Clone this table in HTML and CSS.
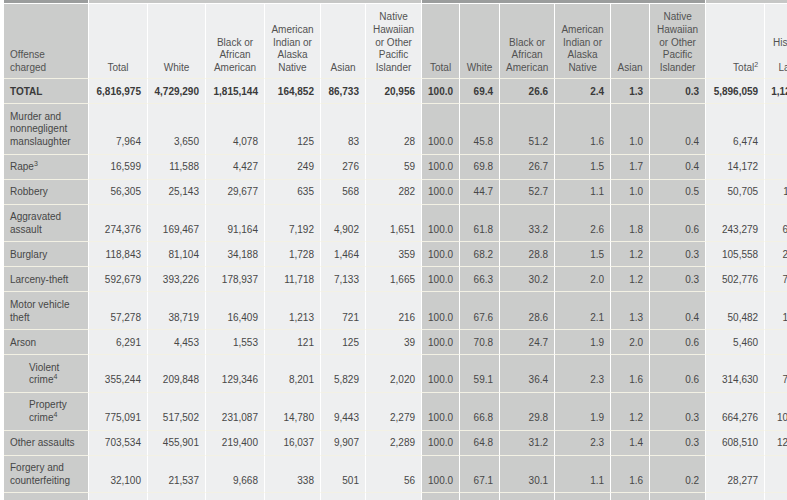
FILE: index.html
```html
<!DOCTYPE html>
<html lang="en">
<head>
<meta charset="utf-8">
<title>Arrests by Race and Ethnicity</title>
<link rel="stylesheet" href="styles.css">
</head>
<body>
<table class="data">
  <colgroup>
    <col class="w85"><col class="w59"><col class="w58"><col class="w59"><col class="w56"><col class="w45"><col class="w56">
    <col class="w38"><col class="w40"><col class="w55"><col class="w56"><col class="w39"><col class="w56">
    <col class="w59"><col class="w55"><col class="w58">
  </colgroup>
  <thead>
    <tr class="group">
      <th class="g-dark"></th>
      <th class="g-mid" colspan="6"></th>
      <th class="g-dark" colspan="6"></th>
      <th class="g-mid" colspan="3"></th>
    </tr>
    <tr class="heads">
      <th class="dk first">Offense<br>charged</th>
      <th>Total</th>
      <th>White</th>
      <th>Black or African American</th>
      <th>American Indian or Alaska Native</th>
      <th>Asian</th>
      <th>Native Hawaiian or Other Pacific Islander</th>
      <th class="dk">Total</th>
      <th class="dk">White</th>
      <th class="dk">Black or African American</th>
      <th class="dk">American Indian or Alaska Native</th>
      <th class="dk">Asian</th>
      <th class="dk">Native Hawaiian or Other Pacific Islander</th>
      <th class="right">Total<sup>2</sup></th>
      <th>Hispanic<br>or<br>Latino</th>
      <th>Not Hispanic or Latino</th>
    </tr>
  </thead>
  <tbody>
    <tr class="bold">
      <td class="first">TOTAL</td><td>6,816,975</td><td>4,729,290</td><td>1,815,144</td><td>164,852</td><td>86,733</td><td>20,956</td>
      <td class="dk">100.0</td><td class="dk">69.4</td><td class="dk">26.6</td><td class="dk">2.4</td><td class="dk">1.3</td><td class="dk">0.3</td>
      <td>5,896,059</td><td>1,124,560</td><td>4,771,499</td>
    </tr>
    <tr>
      <td class="first">Murder and nonnegligent manslaughter</td><td>7,964</td><td>3,650</td><td>4,078</td><td>125</td><td>83</td><td>28</td>
      <td class="dk">100.0</td><td class="dk">45.8</td><td class="dk">51.2</td><td class="dk">1.6</td><td class="dk">1.0</td><td class="dk">0.4</td>
      <td>6,474</td><td>1,351</td><td>5,123</td>
    </tr>
    <tr>
      <td class="first">Rape<sup>3</sup></td><td>16,599</td><td>11,588</td><td>4,427</td><td>249</td><td>276</td><td>59</td>
      <td class="dk">100.0</td><td class="dk">69.8</td><td class="dk">26.7</td><td class="dk">1.5</td><td class="dk">1.7</td><td class="dk">0.4</td>
      <td>14,172</td><td>3,457</td><td>10,715</td>
    </tr>
    <tr>
      <td class="first">Robbery</td><td>56,305</td><td>25,143</td><td>29,677</td><td>635</td><td>568</td><td>282</td>
      <td class="dk">100.0</td><td class="dk">44.7</td><td class="dk">52.7</td><td class="dk">1.1</td><td class="dk">1.0</td><td class="dk">0.5</td>
      <td>50,705</td><td>11,129</td><td>39,576</td>
    </tr>
    <tr>
      <td class="first">Aggravated assault</td><td>274,376</td><td>169,467</td><td>91,164</td><td>7,192</td><td>4,902</td><td>1,651</td>
      <td class="dk">100.0</td><td class="dk">61.8</td><td class="dk">33.2</td><td class="dk">2.6</td><td class="dk">1.8</td><td class="dk">0.6</td>
      <td>243,279</td><td>64,530</td><td>178,749</td>
    </tr>
    <tr>
      <td class="first">Burglary</td><td>118,843</td><td>81,104</td><td>34,188</td><td>1,728</td><td>1,464</td><td>359</td>
      <td class="dk">100.0</td><td class="dk">68.2</td><td class="dk">28.8</td><td class="dk">1.5</td><td class="dk">1.2</td><td class="dk">0.3</td>
      <td>105,558</td><td>22,067</td><td>83,491</td>
    </tr>
    <tr>
      <td class="first">Larceny-theft</td><td>592,679</td><td>393,226</td><td>178,937</td><td>11,718</td><td>7,133</td><td>1,665</td>
      <td class="dk">100.0</td><td class="dk">66.3</td><td class="dk">30.2</td><td class="dk">2.0</td><td class="dk">1.2</td><td class="dk">0.3</td>
      <td>502,776</td><td>78,776</td><td>424,000</td>
    </tr>
    <tr>
      <td class="first">Motor vehicle theft</td><td>57,278</td><td>38,719</td><td>16,409</td><td>1,213</td><td>721</td><td>216</td>
      <td class="dk">100.0</td><td class="dk">67.6</td><td class="dk">28.6</td><td class="dk">2.1</td><td class="dk">1.3</td><td class="dk">0.4</td>
      <td>50,482</td><td>12,546</td><td>37,936</td>
    </tr>
    <tr>
      <td class="first">Arson</td><td>6,291</td><td>4,453</td><td>1,553</td><td>121</td><td>125</td><td>39</td>
      <td class="dk">100.0</td><td class="dk">70.8</td><td class="dk">24.7</td><td class="dk">1.9</td><td class="dk">2.0</td><td class="dk">0.6</td>
      <td>5,460</td><td>892</td><td>4,568</td>
    </tr>
    <tr>
      <td class="first indent">Violent crime<sup>4</sup></td><td>355,244</td><td>209,848</td><td>129,346</td><td>8,201</td><td>5,829</td><td>2,020</td>
      <td class="dk">100.0</td><td class="dk">59.1</td><td class="dk">36.4</td><td class="dk">2.3</td><td class="dk">1.6</td><td class="dk">0.6</td>
      <td>314,630</td><td>76,467</td><td>238,163</td>
    </tr>
    <tr>
      <td class="first indent">Property crime<sup>4</sup></td><td>775,091</td><td>517,502</td><td>231,087</td><td>14,780</td><td>9,443</td><td>2,279</td>
      <td class="dk">100.0</td><td class="dk">66.8</td><td class="dk">29.8</td><td class="dk">1.9</td><td class="dk">1.2</td><td class="dk">0.3</td>
      <td>664,276</td><td>104,281</td><td>559,995</td>
    </tr>
    <tr>
      <td class="first">Other assaults</td><td>703,534</td><td>455,901</td><td>219,400</td><td>16,037</td><td>9,907</td><td>2,289</td>
      <td class="dk">100.0</td><td class="dk">64.8</td><td class="dk">31.2</td><td class="dk">2.3</td><td class="dk">1.4</td><td class="dk">0.3</td>
      <td>608,510</td><td>128,345</td><td>480,165</td>
    </tr>
    <tr>
      <td class="first">Forgery and counterfeiting</td><td>32,100</td><td>21,537</td><td>9,668</td><td>338</td><td>501</td><td>56</td>
      <td class="dk">100.0</td><td class="dk">67.1</td><td class="dk">30.1</td><td class="dk">1.1</td><td class="dk">1.6</td><td class="dk">0.2</td>
      <td>28,277</td><td>4,372</td><td>23,905</td>
    </tr>
    <tr>
      <td class="first">Fraud</td><td>95,126</td><td>61,040</td><td>31,502</td><td>1,213</td><td>1,086</td><td>285</td>
      <td class="dk">100.0</td><td class="dk">64.2</td><td class="dk">33.1</td><td class="dk">1.3</td><td class="dk">1.1</td><td class="dk">0.3</td>
      <td>82,467</td><td>11,322</td><td>71,145</td>
    </tr>
  </tbody>
</table>
</body>
</html>
```

FILE: styles.css
```css
html {
  overflow: hidden;
  background: #ffffff;
}

body {
  margin: 0 0 0 4px;
  font-family: "Liberation Sans", Arial, sans-serif;
  font-size: 10px;
  color: #474747;
}

.data {
  table-layout: fixed;
  border-collapse: separate;
  border-spacing: 0;
  width: 873px;
}

.w85 { width: 85px; }
.w59 { width: 59px; }
.w58 { width: 58px; }
.w56 { width: 56px; }
.w55 { width: 55px; }
.w45 { width: 45px; }
.w40 { width: 40px; }
.w39 { width: 39px; }
.w38 { width: 38px; }

.data th,
.data td {
  box-sizing: border-box;
  padding: 6.5px 6px 4.75px 6px;
  line-height: 12.75px;
  vertical-align: bottom;
  background: #eeeff0;
  border-right: 1px solid #ffffff;
  border-bottom: 1px solid #f3f1e4;
}

.data td {
  text-align: right;
}

.data th {
  padding-top: 7px;
  padding-bottom: 3.25px;
  font-weight: normal;
  text-align: center;
  color: #525252;
}

.data .group th {
  height: 4px;
  padding: 0;
  line-height: 0;
  border-bottom: 1px solid #ffffff;
}

.data .group .g-dark {
  background: #9b9d9d;
}

.data .group .g-mid {
  background: #c6c7c6;
}

.data .dk {
  background: #cbcccb;
}

.data .first {
  text-align: left;
  background: #cbcccb;
}

.data th.right {
  text-align: right;
}

.data .indent {
  padding-left: 25px;
}

.bold td {
  font-weight: bold;
  color: #3a3a3a;
}

sup {
  font-size: 7px;
  line-height: 0;
  vertical-align: 4px;
}
```
